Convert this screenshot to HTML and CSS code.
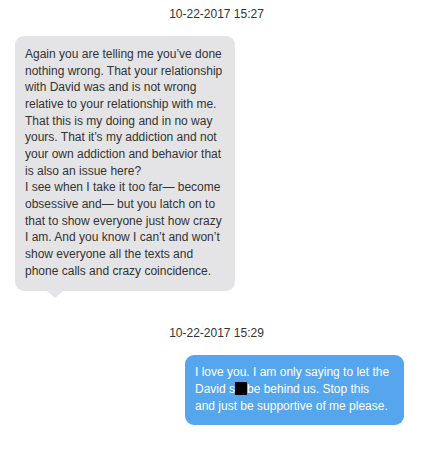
FILE: index.html
```html
<!DOCTYPE html>
<html lang="en">

<head>
    <meta charset="UTF-8">
    <meta name="viewport" content="width=device-width, initial-scale=1.0">
    <title>Messages</title>
    <link rel="stylesheet" href="styles.css">
</head>

<body>

    <div class="thread">
        <div class="timestamp">10-22-2017 15:27</div>
        <div class="row row-in">
            <div class="bubble bubble-in">
                Again you are telling me you’ve done nothing wrong. That your relationship with David was and is not wrong relative to your relationship with me. That this is my doing and in no way yours. That it’s my addiction and not your own addiction and behavior that is also an issue here?<br>
                I see when I take it too far— become obsessive and— but you latch on to that to show everyone just how crazy I am. And you know I can’t and won’t show everyone all the texts and phone calls and crazy coincidence.
            </div>
        </div>

        <div class="timestamp timestamp-gap">10-22-2017 15:29</div>
        <div class="row row-out">
            <div class="bubble bubble-out">
                I love you. I am only saying to let the David s<span class="redacted"></span>be behind us. Stop this and just be supportive of me please.
            </div>
        </div>
    </div>

</body>

</html>
```

FILE: styles.css
```css
* {
    box-sizing: border-box;
}

body {
    margin: 0;
    background-color: #fff;
    font-family: "Liberation Sans", Arial, sans-serif;
    color: #333;
}

.thread {
    padding-top: 6px;
}

.timestamp {
    text-align: center;
    font-size: 12px;
    line-height: 17px;
    color: #333;
}

.timestamp-gap {
    margin-top: 34px;
}

.row {
    display: flex;
    margin-top: 13px;
}

.row-in {
    justify-content: flex-start;
    padding-left: 15px;
}

.row-out {
    justify-content: flex-end;
    padding-right: 29px;
}

.bubble {
    position: relative;
    font-size: 12px;
    line-height: 16.65px;
    border-radius: 9px;
}

.bubble::after {
    content: "";
    position: absolute;
    top: 100%;
    border-left: 8px solid transparent;
    border-right: 8px solid transparent;
    border-top: 7px solid;
}

.bubble-in {
    width: 220px;
    padding: 10px 10px 12px;
    background-color: #e4e4e6;
    color: #333;
}

.bubble-in::after {
    left: 32px;
    border-top-color: #e4e4e6;
}

.bubble-out {
    width: 219px;
    padding: 9px 12px 11px 10px;
    background-color: #55a6ec;
    color: #fff;
}

.bubble-out::after {
    right: 31px;
    border-top-color: #55a6ec;
}

.redacted {
    display: inline-block;
    width: 12px;
    height: 13px;
    background-color: #000;
    vertical-align: -2px;
}
```
